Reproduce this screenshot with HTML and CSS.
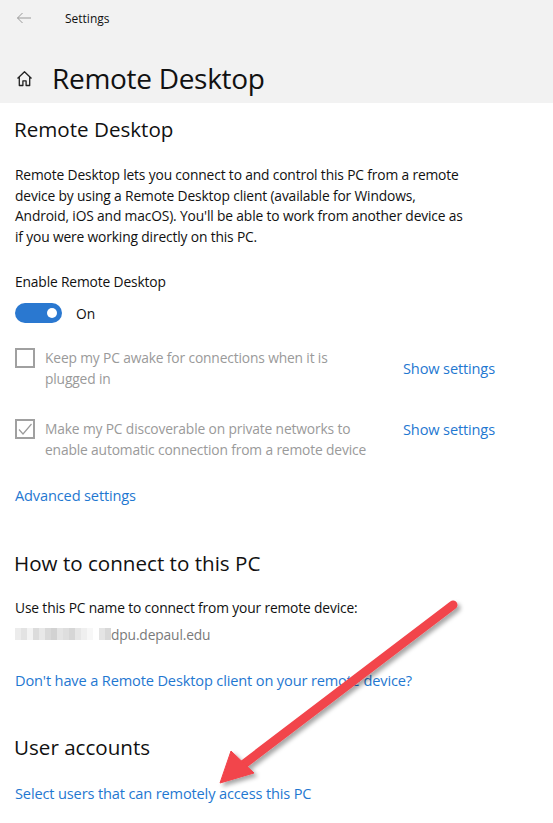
FILE: index.html
```html
<!DOCTYPE html>
<html>
<head>
<meta charset="utf-8">
<link rel="stylesheet" href="styles.css">
</head>
<body>
<div class="page">
  <header class="head">
    <div class="topbar">
      <svg class="back" width="16" height="12" viewBox="0 0 16 12"><path d="M15 6H1.5M6.5 1L1.5 6l5 5" fill="none" stroke="#9a9a9a" stroke-width="1"/></svg>
      <span class="app">Settings</span>
    </div>
    <div class="titlerow">
      <svg class="home" width="17" height="17" viewBox="0 0 17 17"><path d="M1.5 8.5L8.5 1.8l7 6.7M3.3 6.9V15.5h3.6v-4.6h3.2v4.6h3.6V6.9" fill="none" stroke="#222" stroke-width="1.3" stroke-linejoin="round"/></svg>
      <h1 class="title">Remote Desktop</h1>
    </div>
  </header>
  <main class="content">
    <h2 class="h2 first">Remote Desktop</h2>
    <p class="desc">Remote Desktop lets you connect to and control this PC from a remote<br>device by using a Remote Desktop client (available for Windows,<br>Android, iOS and macOS). You'll be able to work from another device as<br>if you were working directly on this PC.</p>
    <div class="label">Enable Remote Desktop</div>
    <div class="toggle-row">
      <span class="toggle"><span class="knob"></span></span>
      <span class="on">On</span>
    </div>
    <div class="opt opt1">
      <span class="cb"></span>
      <span class="opt-text">Keep my PC awake for connections when it is<br>plugged in</span>
      <a class="link show">Show settings</a>
    </div>
    <div class="opt opt2">
      <span class="cb"><svg width="16" height="16" viewBox="0 0 16 16"><path d="M2 8.5l4 4.5L14.5 3" fill="none" stroke="#9b9b9b" stroke-width="1.2"/></svg></span>
      <span class="opt-text">Make my PC discoverable on private networks to<br>enable automatic connection from a remote device</span>
      <a class="link show top">Show settings</a>
    </div>
    <a class="link block adv">Advanced settings</a>

    <h2 class="h2 sec">How to connect to this PC</h2>
    <div class="use">Use this PC name to connect from your remote device:</div>
    <div class="host">
      <span class="blur">
        <i style="background:#ececec"></i><i style="background:#e3e3e3"></i><i style="background:#f3f3f3"></i><i style="background:#dcdcdc"></i><i style="background:#e8e8e8"></i><i style="background:#d9d9d9"></i><i style="background:#d2d2d2"></i><i style="background:#e4e4e4"></i><i style="background:#dedede"></i><i style="background:#d6d6d6"></i><i style="background:#e6e6e6"></i><i style="background:#efefef"></i><i style="background:#f7f7f7"></i><i style="background:#ffffff"></i><i style="background:#e4e4e4"></i><i style="background:#d8d8d8"></i>
      </span><span class="hostname">dpu.depaul.edu</span>
    </div>
    <a class="link block client">Don't have a Remote Desktop client on your remote device?</a>

    <h2 class="h2 sec2">User accounts</h2>
    <a class="link block users">Select users that can remotely access this PC</a>
  </main>
  <svg class="arrow" width="553" height="823" viewBox="0 0 553 823">
    <defs>
      <filter id="sh" x="-20%" y="-20%" width="140%" height="140%">
        <feDropShadow dx="3" dy="3" stdDeviation="2" flood-color="#000" flood-opacity="0.35"/>
      </filter>
    </defs>
    <g filter="url(#sh)" fill="#f2444b" stroke="#f2444b">
      <line x1="453" y1="605" x2="244" y2="764" stroke-width="9" stroke-linecap="round"/>
      <polygon points="220,783 231,751 254,773" stroke-width="1" stroke-linejoin="round"/>
    </g>
  </svg>
</div>
</body>
</html>
```
FILE: styles.css
```css
* { box-sizing: border-box; }
html, body { margin: 0; padding: 0; background: #fff; }
body {
  font-family: "Open Sans", "Noto Sans", sans-serif;
  color: #000;
  width: 553px;
  height: 823px;
  overflow: hidden;
}
.page { position: relative; width: 553px; height: 823px; }
.head {
  background: #f2f2f2;
  height: 103px;
  padding-left: 16px;
}
.topbar {
  display: flex;
  align-items: center;
  height: 36px;
}
.back { margin-top: -1px; }
.app {
  margin-left: 33px;
  font-size: 12px;
  color: #111;
}
.titlerow {
  display: flex;
  align-items: center;
  margin-top: 26px;
  height: 32px;
}
.home { margin-top: 1px; }
.title {
  margin: 0 0 0 19px;
  font-weight: 400;
  font-size: 28px;
  line-height: 32px;
  letter-spacing: -0.3px;
  color: #111;
}
.content { padding: 0 15px; }
.h2 {
  margin: 0 0 0 -1px;
  font-weight: 400;
  font-size: 20.6px;
  line-height: 28px;
  letter-spacing: 0;
  color: #111;
}
.h2.first { padding-top: 12px; }
.desc {
  margin: 22px 0 0;
  font-size: 13.8px;
  line-height: 20.5px;
  letter-spacing: -0.15px;
  color: #111;
}
.label {
  margin-top: 25px;
  font-size: 13.8px;
  line-height: 20px;
  letter-spacing: -0.15px;
  color: #111;
}
.toggle-row {
  display: flex;
  align-items: center;
  margin-top: 11px;
  height: 20px;
}
.toggle {
  width: 47px;
  height: 20px;
  border-radius: 10px;
  background: #2a78d0;
  display: flex;
  align-items: center;
  justify-content: flex-end;
  padding-right: 5px;
}
.knob {
  width: 10px;
  height: 10px;
  border-radius: 50%;
  background: #fff;
}
.on {
  margin-left: 14px;
  font-size: 13.8px;
  color: #111;
}
.opt {
  display: flex;
  align-items: flex-start;
}
.opt1 { margin-top: 24px; }
.opt2 { margin-top: 29px; }
.cb {
  width: 20px;
  height: 20px;
  border: 2px solid #a0a0a0;
  flex: none;
  margin-top: 1px;
  display: flex;
  align-items: center;
  justify-content: center;
}
.opt-text {
  margin-left: 10px;
  width: 358px;
  font-size: 13.8px;
  line-height: 21px;
  letter-spacing: -0.15px;
  color: #9a9a9a;
  flex: none;
}
.link {
  color: #1f78d1;
  font-size: 14.6px;
  letter-spacing: -0.15px;
  text-decoration: none;
  line-height: 20px;
}
.block { display: block; }
.show { align-self: center; }
.show.top { align-self: flex-start; margin-top: 1px; }
.adv { margin-top: 25px; }
.h2.sec { margin-top: 44px; }
.use {
  margin-top: 21px;
  font-size: 13.8px;
  line-height: 20px;
  letter-spacing: -0.15px;
  color: #111;
}
.host {
  margin-top: 6px;
  display: flex;
  align-items: center;
  height: 20px;
}
.blur { display: flex; height: 12px; }
.blur i { display: block; width: 6px; height: 12px; }
.hostname {
  font-size: 13.8px;
  letter-spacing: -0.15px;
  color: #7a7a7a;
}
.client { margin-top: 26px; }
.h2.sec2 { margin-top: 43px; }
.users { margin-top: 22px; }
.arrow {
  position: absolute;
  left: 0;
  top: 0;
  pointer-events: none;
}
```
